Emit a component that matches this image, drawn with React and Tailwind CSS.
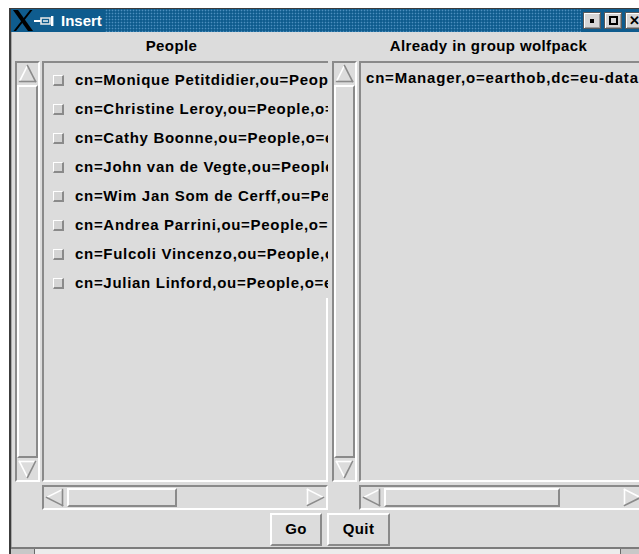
import React from "react";

const LIGHT = "#ffffff";
const SHADE = "#8a8a8a";

// Outlined scrollbar arrow, lit from the top-left like the rest of the Tk widgets
function Arrow({ dir }) {
  let segs;
  if (dir === "up")
    segs = [
      [10.5, 2.5, 2.5, 18.5, LIGHT],
      [10.5, 2.5, 18.5, 18.5, SHADE],
      [2.5, 18.5, 18.5, 18.5, SHADE],
    ];
  else if (dir === "down")
    segs = [
      [2.5, 2.5, 18.5, 2.5, LIGHT],
      [2.5, 2.5, 10.5, 18.5, LIGHT],
      [18.5, 2.5, 10.5, 18.5, SHADE],
    ];
  else if (dir === "left")
    segs = [
      [2.5, 10.5, 18.5, 2.5, LIGHT],
      [2.5, 10.5, 18.5, 18.5, SHADE],
      [18.5, 2.5, 18.5, 18.5, SHADE],
    ];
  else
    segs = [
      [2.5, 2.5, 2.5, 18.5, LIGHT],
      [2.5, 2.5, 18.5, 10.5, LIGHT],
      [2.5, 18.5, 18.5, 10.5, SHADE],
    ];
  return (
    <svg width="21" height="21" viewBox="0 0 21 21" className="block shrink-0">
      {segs.map(([x1, y1, x2, y2, c], i) => (
        <line key={i} x1={x1} y1={y1} x2={x2} y2={y2} stroke={c} strokeWidth="1.6" strokeLinecap="square" />
      ))}
    </svg>
  );
}

function VScroll() {
  return (
    <div className="w-[25px] h-full shrink-0 flex flex-col border-2 border-t-[#8a8a8a] border-l-[#8a8a8a] border-r-white border-b-white">
      <Arrow dir="up" />
      <div className="flex-1 my-px border-2 border-t-white border-l-white border-r-[#8a8a8a] border-b-[#8a8a8a]" />
      <Arrow dir="down" />
    </div>
  );
}

function HScroll({ thumb }) {
  return (
    <div className="w-[286px] h-[25px] shrink-0 flex border-2 border-t-[#8a8a8a] border-l-[#8a8a8a] border-r-white border-b-white">
      <Arrow dir="left" />
      <div className="flex-1 flex items-stretch py-px">
        <div className={`ml-[2px] border-2 border-t-white border-l-white border-r-[#8a8a8a] border-b-[#8a8a8a] ${thumb}`} />
      </div>
      <Arrow dir="right" />
    </div>
  );
}

const people = [
  "cn=Monique Petitdidier,ou=People,o=earthob,dc=eu-datagrid,dc=org",
  "cn=Christine Leroy,ou=People,o=earthob,dc=eu-datagrid,dc=org",
  "cn=Cathy Boonne,ou=People,o=earthob,dc=eu-datagrid,dc=org",
  "cn=John van de Vegte,ou=People,o=earthob,dc=eu-datagrid,dc=org",
  "cn=Wim Jan Som de Cerff,ou=People,o=earthob,dc=eu-datagrid,dc=org",
  "cn=Andrea Parrini,ou=People,o=earthob,dc=eu-datagrid,dc=org",
  "cn=Fulcoli Vincenzo,ou=People,o=earthob,dc=eu-datagrid,dc=org",
  "cn=Julian Linford,ou=People,o=earthob,dc=eu-datagrid,dc=org",
];

function PersonRow({ name }) {
  return (
    <div className="h-[29px] flex items-center pl-[9px] whitespace-nowrap">
      <span className="w-[11px] h-[11px] shrink-0 bg-[#d4d4d4] border-t border-l border-r-2 border-b-2 border-t-white border-l-white border-r-[#8a8a8a] border-b-[#8a8a8a]" />
      <span className="ml-[11px] tracking-[0.7px]">{name}</span>
    </div>
  );
}

function XLogo() {
  return (
    <svg width="20" height="21" viewBox="0 0 20 21" className="block shrink-0">
      <polygon points="0,0 5,0 20,21 15,21" fill="#000" />
      <polygon points="17,0 19.5,0 3,21 0.5,21" fill="#000" />
    </svg>
  );
}

function Pin() {
  return (
    <svg width="20" height="10" viewBox="0 0 20 10" className="block shrink-0">
      <line x1="0" y1="5" x2="7" y2="5" stroke="#fff" strokeWidth="2" />
      <polygon points="7,2 16,2 16,8 7,8" fill="none" stroke="#e8e8e8" strokeWidth="1.6" />
      <line x1="9" y1="5" x2="14" y2="5" stroke="#fff" strokeWidth="1.4" />
      <rect x="17" y="0" width="2.4" height="10" fill="#fff" />
    </svg>
  );
}

function TitleButton({ children }) {
  return (
    <div className="w-[18px] h-[17px] flex items-center justify-center bg-[#d6d6d6] border border-[#5a5a5a] shadow-[inset_1px_1px_0_#ffffff,inset_-1px_-1px_0_#9a9a9a]">
      {children}
    </div>
  );
}

function TkButton({ label, w }) {
  return (
    <div className={`${w} h-[33px] flex items-center justify-center border-2 border-t-white border-l-white border-r-[#8a8a8a] border-b-[#8a8a8a] bg-[#dcdcdc]`}>
      {label}
    </div>
  );
}

export default function App() {
  return (
    <div className="w-[639px] h-[554px] overflow-hidden bg-white pt-[8px] font-['Liberation_Sans',Arial,sans-serif] text-[15px] font-bold tracking-[0.4px] text-black">
      <div className="ml-[9px] w-[642px] h-[546px] flex flex-col border-t border-l-2 border-r-2 border-[#3c3c3c]">
        {/* title bar */}
        <div className="h-[23px] shrink-0 flex bg-[#0f5c8e]">
          <div className="w-[94px] shrink-0 flex items-center pl-[2px]">
            <XLogo />
            <div className="ml-[1px] mt-[1px]">
              <Pin />
            </div>
            <span className="ml-[7px] text-white tracking-normal leading-none">Insert</span>
          </div>
          <div className="flex-1 bg-[radial-gradient(circle,#4d8fbf_0.7px,transparent_1.1px)] bg-[length:3px_3px]" />
          <div className="flex items-center gap-[3px] pl-[2px] pr-[6px]">
            <TitleButton>
              <span className="w-[4px] h-[4px] bg-black" />
            </TitleButton>
            <TitleButton>
              <span className="w-[9px] h-[9px] border-2 border-black" />
            </TitleButton>
            <TitleButton>
              <span className="text-[13px] leading-none tracking-normal">✕</span>
            </TitleButton>
          </div>
        </div>

        {/* dialog body */}
        <div className="flex-1 flex flex-col bg-[#dcdcdc] border-l border-r border-l-[#a8a8a8] border-r-[#a8a8a8]">
          <div className="h-[29px] shrink-0 flex items-center pl-[3px]">
            <div className="w-[313px] text-center">People</div>
            <div className="w-[313px] ml-[4px] text-center">Already in group wolfpack</div>
          </div>

          <div className="h-[421px] shrink-0 flex pl-[3px]">
            <VScroll />
            <div className="ml-[2px] w-[286px] h-full flex flex-col overflow-hidden border-t-2 border-l-2 border-b-2 border-t-[#8a8a8a] border-l-[#8a8a8a] border-b-white">
              <div className="pt-[3px]">
                {people.map((p) => (
                  <PersonRow key={p} name={p} />
                ))}
              </div>
              <div className="flex-1 border-r-2 border-white" />
            </div>
            <div className="ml-[4px] h-full">
              <VScroll />
            </div>
            <div className="ml-[2px] w-[286px] h-full flex flex-col overflow-hidden border-t-2 border-l-2 border-b-2 border-t-[#8a8a8a] border-l-[#8a8a8a] border-b-white">
              <div className="pt-[3px] pl-[5px] h-[27px] flex items-center whitespace-nowrap tracking-[0.8px]">
                cn=Manager,o=earthob,dc=eu-datagrid,dc=org
              </div>
              <div className="flex-1 border-r-2 border-white" />
            </div>
          </div>

          <div className="mt-[3px] flex pl-[30px]">
            <HScroll thumb="w-[110px]" />
            <div className="ml-[31px]">
              <HScroll thumb="w-[176px]" />
            </div>
          </div>

          <div className="mt-[3px] flex justify-center gap-[5px]">
            <TkButton label="Go" w="w-[52px]" />
            <TkButton label="Quit" w="w-[63px]" />
          </div>
        </div>

        {/* lower frame edge */}
        <div className="h-[2px] shrink-0 bg-[#7c7c7c]" />
        <div className="h-[5px] shrink-0 flex">
          <div className="w-[24px] bg-[#c8c8c8] border-r border-[#6a6a6a]" />
          <div className="w-[586px] bg-[#ececec] border-r border-[#6a6a6a]" />
          <div className="flex-1 bg-[#c8c8c8]" />
        </div>
      </div>
    </div>
  );
}
